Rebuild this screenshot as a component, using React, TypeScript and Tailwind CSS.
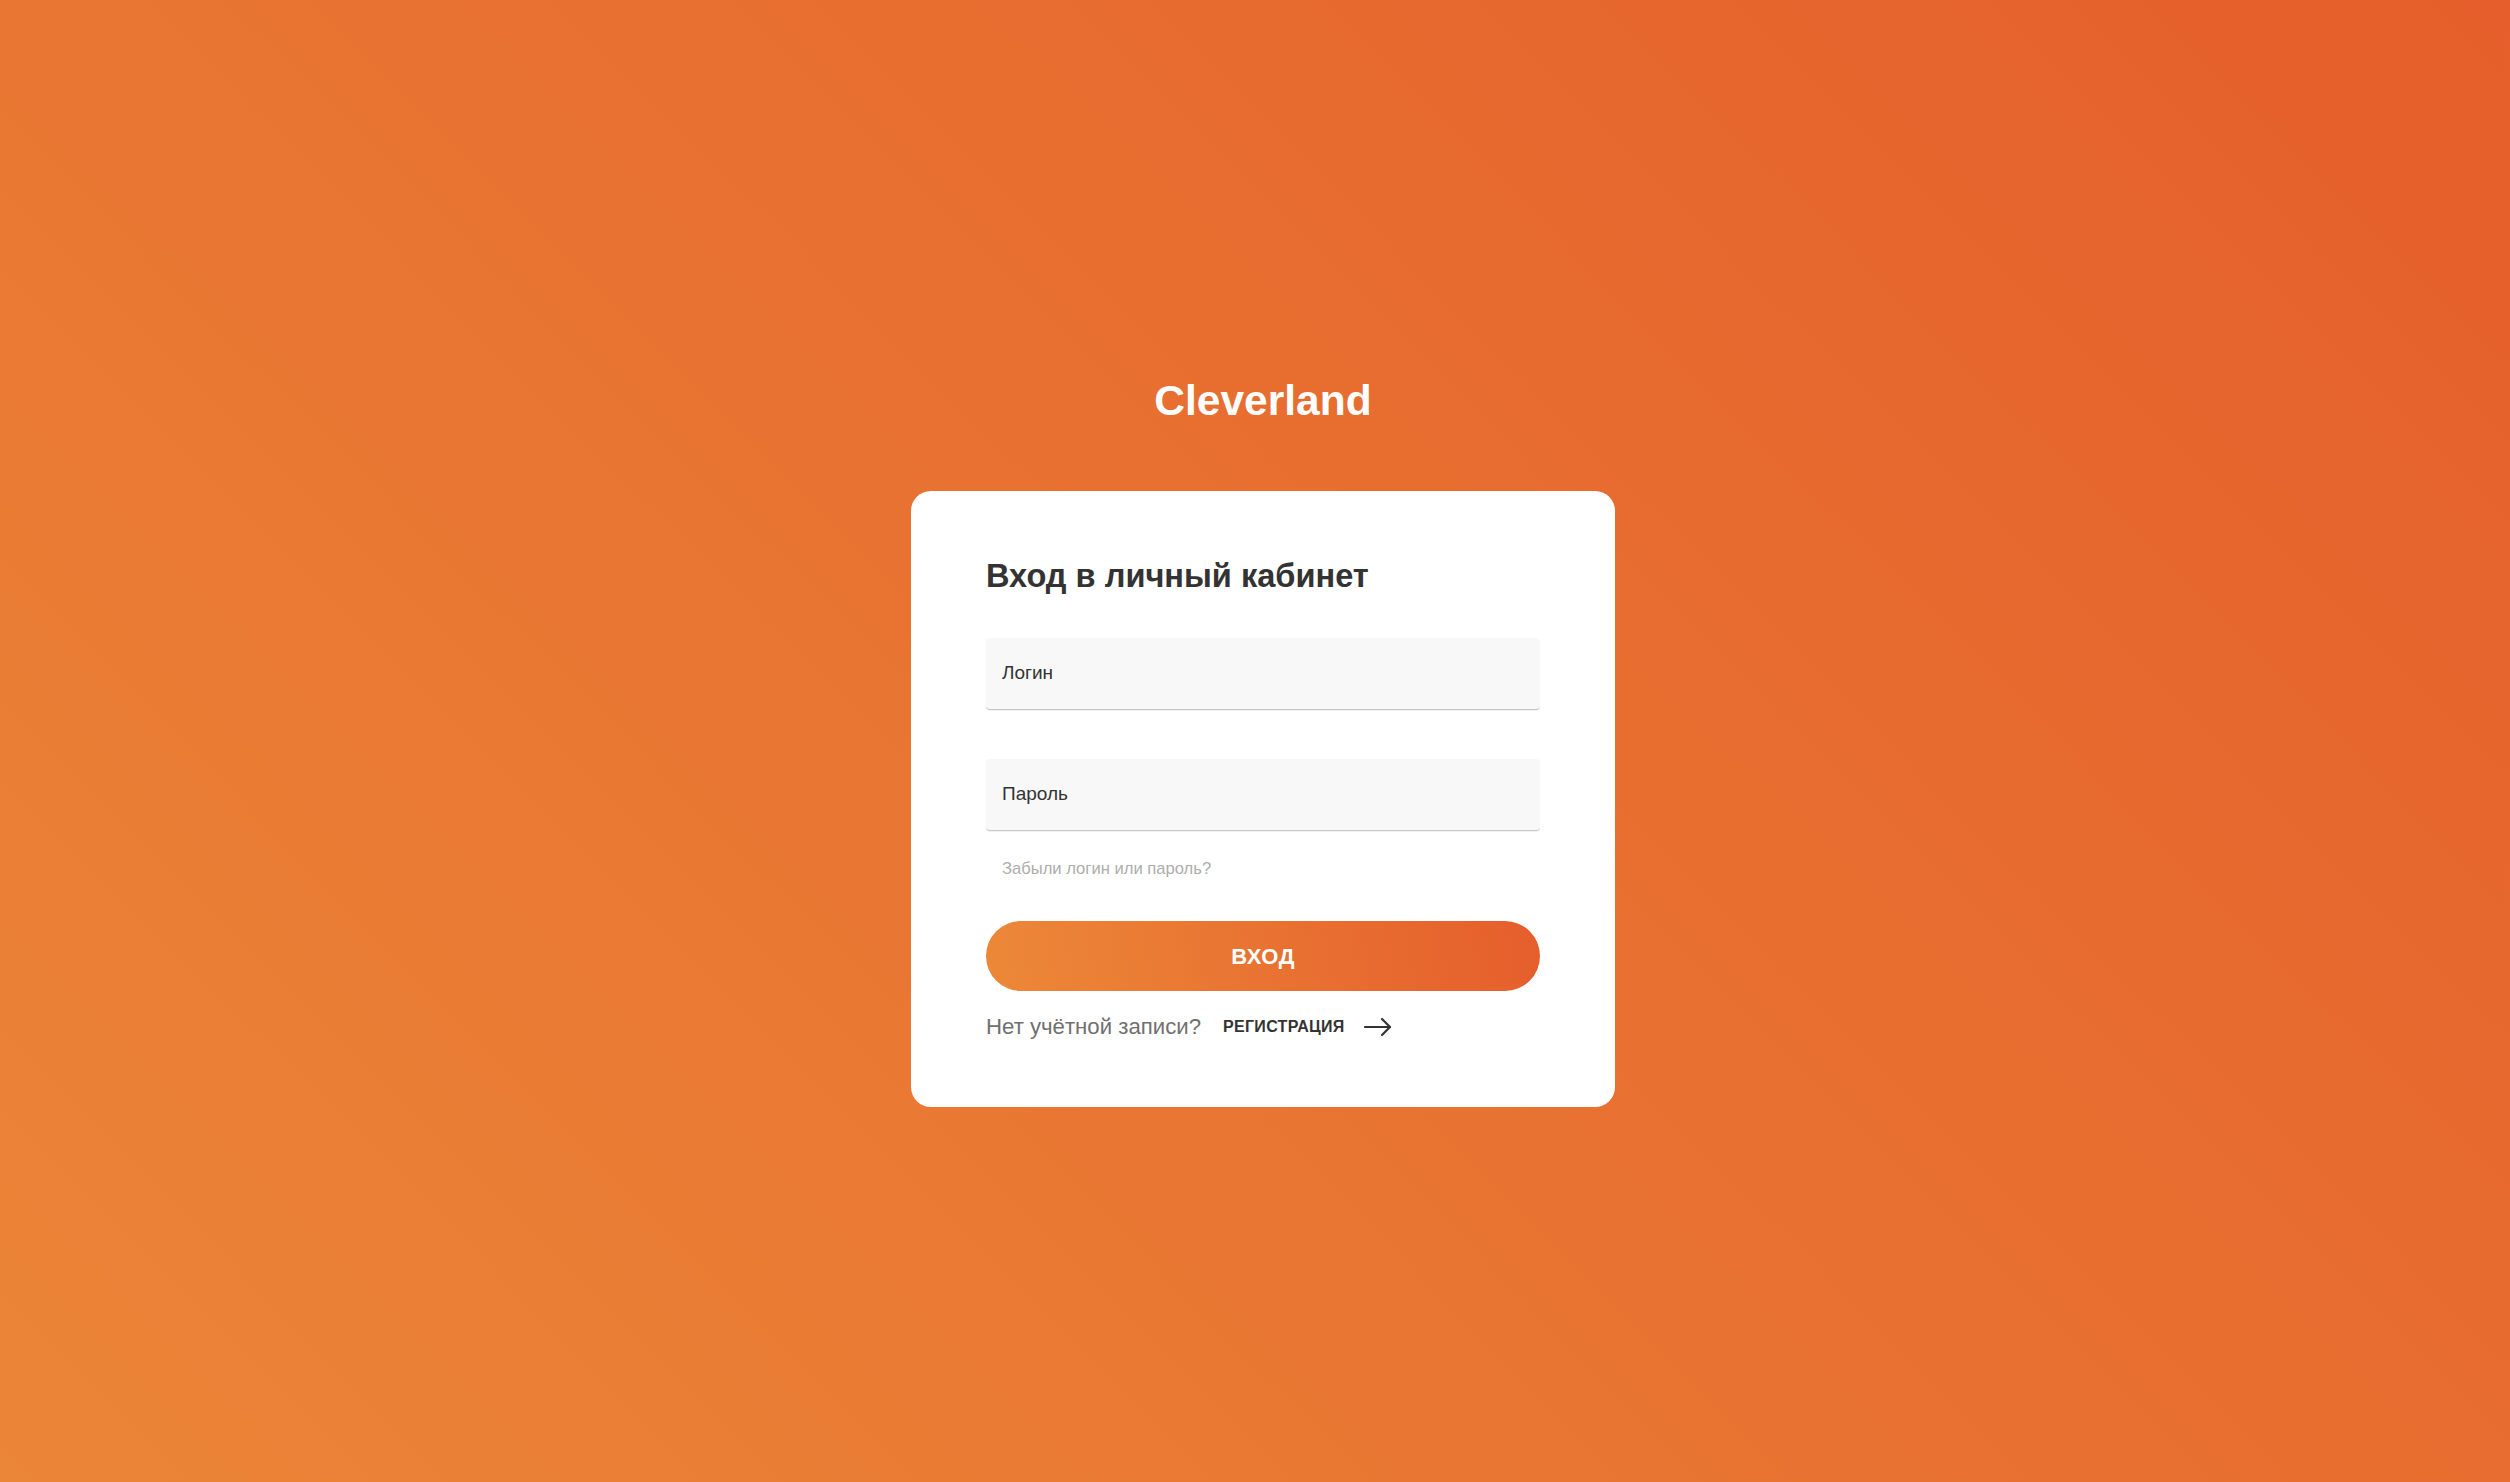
import React from "react";

const font = { fontFamily: '"Liberation Sans", Arial, Helvetica, sans-serif' };

const Field = ({ label, type = "text" }: { label: string; type?: string }) => (
  <input
    type={type}
    placeholder={label}
    className="block w-full h-[72px] px-4 bg-[#f8f8f8] rounded-[4px] border-b border-[#c6c6c6] shadow-[0_1px_1px_rgba(0,0,0,0.06)] text-[19px] text-[#333] placeholder:text-[#333] outline-none"
    style={font}
  />
);

const ArrowIcon = () => (
  <svg width="28" height="20" viewBox="0 0 28 20" fill="none" stroke="#333" strokeWidth="2.2" strokeLinecap="round" strokeLinejoin="round">
    <path d="M1 10h25" />
    <path d="M18 2l8 8-8 8" />
  </svg>
);

export default function App() {
  return (
    <div
      className="min-h-screen w-full flex flex-col items-center justify-center pt-[5px] pl-4 bg-[linear-gradient(45deg,#EB8537,#E55E2B)]"
      style={font}
    >
      <h1 className="text-[42.5px] leading-none font-bold text-white mb-[69px]">Cleverland</h1>

      <div className="w-[704px] bg-white rounded-[20px] px-[75px] pt-[69px] pb-[69px]">
        <h2 className="text-[32.6px] leading-none font-bold text-[#333] mb-[45px]">Вход в личный кабинет</h2>

        <div className="flex flex-col gap-[49px]">
          <Field label="Логин" />
          <Field label="Пароль" type="password" />
        </div>

        <a href="#" className="block mt-[30px] ml-4 text-[16.6px] leading-none text-[#adadad]">
          Забыли логин или пароль?
        </a>

        <button
          type="button"
          className="mt-[44px] w-full h-[70px] rounded-full bg-[linear-gradient(80deg,#EC8838,#E55E2C)] text-white text-[22px] font-bold tracking-[0.5px]"
          style={font}
        >
          ВХОД
        </button>

        <div className="mt-[25px] flex items-center">
          <span className="text-[22.2px] leading-none text-[#707070]">Нет учётной записи?</span>
          <a href="#" className="ml-[22px] flex items-center gap-[19px] text-[16px] leading-none font-bold text-[#333] tracking-[0.3px]">
            РЕГИСТРАЦИЯ
            <ArrowIcon />
          </a>
        </div>
      </div>
    </div>
  );
}
